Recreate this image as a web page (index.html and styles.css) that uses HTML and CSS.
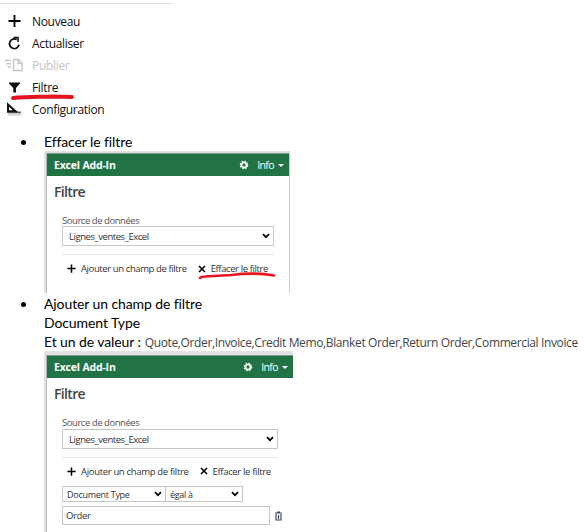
FILE: index.html
```html
<!DOCTYPE html>
<html lang="fr">
<head>
<meta charset="utf-8">
<title>Filtre</title>
<link rel="stylesheet" href="styles.css">
</head>
<body>
<svg width="0" height="0" class="defs">
  <symbol id="plus" viewBox="0 0 12 12"><path d="M6 .5v11M.5 6h11" fill="none" stroke="currentColor" stroke-width="2"/></symbol>
  <symbol id="cross" viewBox="0 0 8 8"><path d="M1 1l6 6M7 1L1 7" fill="none" stroke="currentColor" stroke-width="1.6"/></symbol>
  <symbol id="chev" viewBox="0 0 8 6"><path d="M1 1.2l3 3 3-3" fill="none" stroke="currentColor" stroke-width="1.8"/></symbol>
  <symbol id="gear" viewBox="0 0 10 10"><circle cx="5" cy="5" r="2.5" fill="none" stroke="currentColor" stroke-width="1.7"/><circle cx="5" cy="5" r="3.7" fill="none" stroke="currentColor" stroke-width="1.2" stroke-dasharray="1.7 1.2"/></symbol>
  <symbol id="caret" viewBox="0 0 6 3"><path d="M0 0h6L3 3z" fill="currentColor"/></symbol>
</svg>
<nav class="menu">
  <div class="item"><svg class="ico" viewBox="0 0 18 14"><path d="M9.500 1v12M3.500 7h12" fill="none" stroke="#000" stroke-width="1.8"/></svg><span>Nouveau</span></div>
  <div class="item"><svg class="ico" viewBox="0 0 18 14"><path d="M11.800 3.600A4.800 4.800 0 1 0 14 8.800" fill="none" stroke="#111" stroke-width="1.8"/><path d="M8.500 1.500H13V6" fill="none" stroke="#111" stroke-width="1.500"/></svg><span>Actualiser</span></div>
  <div class="item off"><svg class="ico" viewBox="0 0 18 14"><path d="M0 2.500h6M1.500 5.700H6M3 9h3M8.500 1.500h5L17 5v7.500H8.500zM13 1.500v4h4" fill="none" stroke="#c6c6c6" stroke-width="1.4"/></svg><span>Publier</span></div>
  <div class="item"><svg class="ico" viewBox="0 0 18 14"><path d="M4 2.500h11v1L11 8v4.500H8.300V8L4 3.500z" fill="#111"/></svg><span>Filtre</span>
    <svg class="mark mark-menu" viewBox="0 0 66 8"><path d="M3 5C18 3.500 30 4 42 3.500L62 4" fill="none" stroke="#e41420" stroke-width="4" stroke-linecap="round"/></svg></div>
  <div class="item"><svg class="ico" viewBox="0 0 18 14"><path d="M3 2.500V9.200H10.500z" fill="none" stroke="#111" stroke-width="2"/><path d="M2 10.200h14" stroke="#111"/><path d="M3.500 11.500h12v1.500h-12z" fill="#eee" stroke="#b8aeb4" stroke-width=".7"/></svg><span>Configuration</span></div>
</nav>
<ul class="steps">
  <li>
    <p>Effacer le filtre</p>
    <section class="panel first">
      <header><b>Excel Add-In</b><svg class="gear"><use href="#gear"/></svg><span class="info">Info</span><svg class="caret"><use href="#caret"/></svg></header>
      <div class="content">
        <h2>Filtre</h2>
        <label>Source de données</label>
        <div class="select main"><span>Lignes_ventes_Excel</span><svg class="chev"><use href="#chev"/></svg></div>
        <div class="actions"><svg class="plus"><use href="#plus"/></svg><span class="add">Ajouter un champ de filtre</span><svg class="cross"><use href="#cross"/></svg><span class="clear">Effacer le filtre</span>
          <svg class="mark mark-clear" viewBox="0 0 80 9"><path d="M3 7Q4 5.500 8 5.500L34 4Q58 1 77 4.500" fill="none" stroke="#ec1420" stroke-width="2.600" stroke-linecap="round"/></svg></div>
      </div>
    </section>
  </li>
  <li>
    <p>Ajouter un champ de filtre</p>
    <p>Document Type</p>
    <p class="values"><span>Et un de valeur :</span><span class="list">Quote,Order,Invoice,Credit Memo,Blanket Order,Return Order,Commercial Invoice</span></p>
    <section class="panel second">
      <header><b>Excel Add-In</b><svg class="gear"><use href="#gear"/></svg><span class="info">Info</span><svg class="caret"><use href="#caret"/></svg></header>
      <div class="content">
        <h2>Filtre</h2>
        <label>Source de données</label>
        <div class="select main"><span>Lignes_ventes_Excel</span><svg class="chev"><use href="#chev"/></svg></div>
        <div class="actions"><svg class="plus"><use href="#plus"/></svg><span class="add">Ajouter un champ de filtre</span><svg class="cross"><use href="#cross"/></svg><span class="clear">Effacer le filtre</span></div>
        <div class="criteria"><div class="select field"><span>Document Type</span><svg class="chev"><use href="#chev"/></svg></div><div class="select op"><span>égal à</span><svg class="chev"><use href="#chev"/></svg></div></div>
        <div class="value"><div class="input">Order</div><svg class="trash" viewBox="0 0 7 10"><path d="M0 2h7M2 1h3M1 3v6h5V3M3.500 4v4" fill="none" stroke="#3c4a60" stroke-width="1.200"/></svg></div>
      </div>
    </section>
  </li>
</ul>
</body>
</html>
```
FILE: styles.css
```css
* { box-sizing: border-box; }
body { margin: 0; width: 586px; height: 532px; overflow: hidden; background: #fff; color: #111; font-family: "Open Sans", sans-serif; }
svg { display: block; flex: none; }
span, b, label { white-space: nowrap; }
.defs { position: absolute; }
.menu { width: 173px; height: 133px; margin-top: 3px; border-top: 1px solid #e2e2e2; padding-top: 6px; }
.item { position: relative; display: flex; align-items: center; height: 22px; padding-left: 5px; gap: 9px; font-size: 12px; letter-spacing: -0.32px; }
.ico { width: 18px; height: 14px; }
.off { color: #c4c4c4; }
.mark { position: absolute; }
.mark-menu { left: 10px; top: 17px; width: 66px; height: 8px; }
.steps { margin: -4px 0 0; padding: 0; list-style: none; }
.steps li { position: relative; padding-left: 44px; }
.steps li::before { content: ""; position: absolute; left: 21px; top: 8px; width: 5px; height: 5px; border-radius: 50%; background: #000; }
.steps p { margin: 0; height: 19px; line-height: 19px; font-family: Lato, sans-serif; font-size: 14px; letter-spacing: -0.1px; color: #000; }
.values { display: flex; }
.values .list { font-family: "Open Sans", sans-serif; font-size: 12px; color: #444; margin-left: 4px; letter-spacing: -0.37px; position: relative; top: 1px; }
.panel { overflow: hidden; border-style: solid; border-color: #e2e2e2; color: #333; letter-spacing: -0.4px; }
.first { width: 246px; height: 142px; margin-bottom: 1px; border-width: 2px 0 0 2px; border-right: 1px solid #ccc; }
.second { width: 249px; height: 181px; border-width: 4px 0 0 2px; letter-spacing: -0.33px; }
.panel header { display: flex; align-items: center; height: 23px; background: #217346; border-left: 1px solid #b7b7b7; color: #fff; padding-left: 7px; font-size: 10.5px; border-top: 1px solid #789a86; }
.panel header b { flex: 1; letter-spacing: -0.18px; }
.gear { width: 10px; height: 10px; }
.info { margin-left: 8px; letter-spacing: -0.6px; }
.caret { width: 6px; height: 3px; margin: 0 5px 0 4px; }
.content { border-left: 1px solid #bbb; padding-left: 15px; height: 156px; }
.content h2 { margin: 0 0 0 -8px; padding-top: 6px; height: 38px; font-size: 14px; line-height: 20px; font-weight: 600; letter-spacing: -0.65px; color: #444; }
.content label { display: block; height: 13px; line-height: 13px; font-size: 9.5px; color: #555; letter-spacing: -.45px; }
.first label { height: 12px; }
.select { display: flex; align-items: center; justify-content: space-between; border: 1px solid #c6c6c6; padding: 0 3px 0 6px; font-size: 9.5px; }
.chev { width: 8px; height: 6px; color: #000; }
.main { width: 212px; height: 20px; letter-spacing: -0.45px; }
.second .main { width: 216px; }
.actions { position: relative; display: flex; align-items: center; width: 212px; height: 29px; margin-top: 8px; border-top: 1px solid #e6e6e6; padding: 0 0 1px 5px; font-size: 9.5px; }
.second .actions { width: 216px; height: 28px; margin-top: 8px; }
.plus { width: 9px; height: 9px; color: #000; }
.cross { width: 8px; height: 8px; color: #000; margin-left: 11px; }
.add { margin-left: 5px; }
.clear { margin-left: 5px; }
.mark-clear { left: 135px; top: 16px; width: 80px; height: 9px; }
.criteria { display: flex; margin-top: 1px; }
.field { width: 104px; height: 16px; padding-left: 4px; font-size: 9px; letter-spacing: -0.28px; }
.op { width: 78px; height: 16px; margin-left: -1px; padding-left: 4px; font-size: 9px; }
.value { display: flex; align-items: center; margin-top: 4px; }
.input { width: 208px; height: 19px; line-height: 18px; border: 1px solid #c6c6c6; padding-left: 3px; font-size: 9.5px; }
.trash { width: 7px; height: 10px; margin-left: 5px; }
```
